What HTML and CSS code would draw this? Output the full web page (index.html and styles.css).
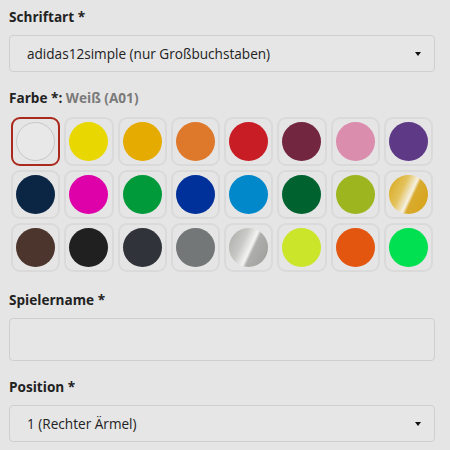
FILE: index.html
```html
<!DOCTYPE html>
<html lang="de">
<head>
<meta charset="utf-8">
<link rel="stylesheet" href="styles.css">
</head>
<body>
<div class="form">
  <div class="field">
    <div class="label">Schriftart *</div>
    <div class="select"><span>adidas12simple (nur Großbuchstaben)</span><span class="caret"></span></div>
  </div>
  <div class="field">
    <div class="label">Farbe *: <span class="muted">Weiß (A01)</span></div>
    <div class="swatches">
      <div class="swatch selected"><span class="dot white"></span></div>
      <div class="swatch"><span class="dot" style="background:#e8d700"></span></div>
      <div class="swatch"><span class="dot" style="background:#e6ab00"></span></div>
      <div class="swatch"><span class="dot" style="background:#de782b"></span></div>
      <div class="swatch"><span class="dot" style="background:#c91d25"></span></div>
      <div class="swatch"><span class="dot" style="background:#72263f"></span></div>
      <div class="swatch"><span class="dot" style="background:#db8dae"></span></div>
      <div class="swatch"><span class="dot" style="background:#5e3a86"></span></div>

      <div class="swatch"><span class="dot" style="background:#0b2645"></span></div>
      <div class="swatch"><span class="dot" style="background:#de00a9"></span></div>
      <div class="swatch"><span class="dot" style="background:#009a3a"></span></div>
      <div class="swatch"><span class="dot" style="background:#00319a"></span></div>
      <div class="swatch"><span class="dot" style="background:#0088cb"></span></div>
      <div class="swatch"><span class="dot" style="background:#00622f"></span></div>
      <div class="swatch"><span class="dot" style="background:#9db61f"></span></div>
      <div class="swatch"><span class="dot gold"></span></div>

      <div class="swatch"><span class="dot" style="background:#4b352c"></span></div>
      <div class="swatch"><span class="dot" style="background:#1f201f"></span></div>
      <div class="swatch"><span class="dot" style="background:#30333a"></span></div>
      <div class="swatch"><span class="dot" style="background:#737777"></span></div>
      <div class="swatch"><span class="dot silver"></span></div>
      <div class="swatch"><span class="dot" style="background:#cbe52b"></span></div>
      <div class="swatch"><span class="dot" style="background:#e2560f"></span></div>
      <div class="swatch"><span class="dot" style="background:#00e050"></span></div>
    </div>
  </div>
  <div class="field">
    <div class="label">Spielername *</div>
    <div class="input"></div>
  </div>
  <div class="field">
    <div class="label">Position *</div>
    <div class="select"><span>1 (Rechter Ärmel)</span><span class="caret"></span></div>
  </div>
</div>
</body>
</html>
```

FILE: styles.css
```css
html, body {
  margin: 0;
  padding: 0;
  background: #e5e5e5;
}
body {
  font-family: "Open Sans", "Noto Sans", sans-serif;
  color: #222;
}
.form {
  width: 426px;
  padding: 6px 0 0 9px;
}
.field {
  margin-bottom: 15px;
}
.label {
  font-size: 13.6px;
  font-weight: 700;
  line-height: 21px;
  color: #222;
  margin-bottom: 8px;
}
.label .muted {
  color: #7a7a7a;
}
.select {
  box-sizing: border-box;
  height: 37px;
  border: 1px solid #cfcfcf;
  border-radius: 4px;
  background: #e6e6e6;
  display: flex;
  align-items: center;
  justify-content: space-between;
  padding: 0 13px 0 17px;
  font-size: 13.6px;
  color: #222;
}
.caret {
  width: 0;
  height: 0;
  border-left: 3.5px solid transparent;
  border-right: 3.5px solid transparent;
  border-top: 4px solid #111;
}
.input {
  box-sizing: border-box;
  height: 43px;
  border: 1px solid #cfcfcf;
  border-radius: 4px;
  background: #e6e6e6;
}
.swatches {
  display: grid;
  grid-template-columns: repeat(8, 1fr);
  margin-top: -1px;
}
.swatch {
  box-sizing: border-box;
  margin: 2px;
  height: 49px;
  border: 2px solid #dadada;
  border-radius: 9px;
  display: flex;
  align-items: center;
  justify-content: center;
}
.swatch.selected {
  border-color: #a92a1c;
}
.dot {
  width: 39px;
  height: 39px;
  border-radius: 50%;
  display: block;
}
.dot.white {
  box-sizing: border-box;
  background: #e8e8e8;
  border: 1.5px solid #c8c8c8;
}
.dot.gold {
  background: linear-gradient(115deg, #d8a514 0%, #e3c35e 35%, #f3ecd8 52%, #f6f0dc 54%, #d9ab2e 60%, #d7a215 100%);
}
.dot.silver {
  background: linear-gradient(115deg, #a9a9a7 0%, #c9c9c6 35%, #f0f0ef 52%, #f3f3f2 54%, #aeaeac 60%, #9c9c99 100%);
}
```
